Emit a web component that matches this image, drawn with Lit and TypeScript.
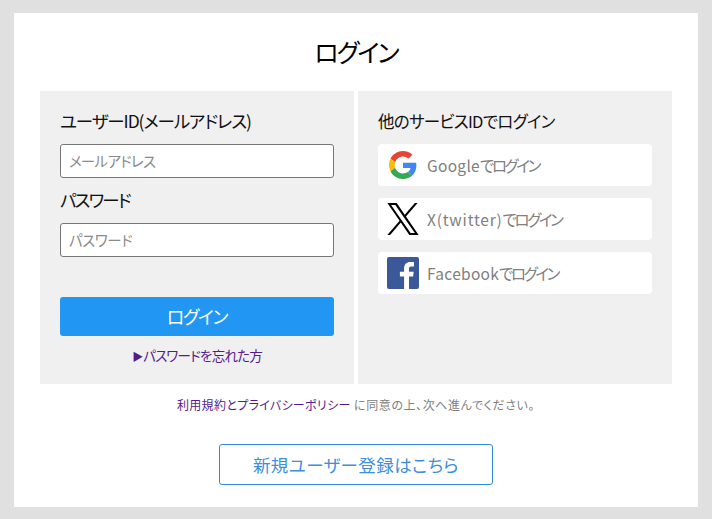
import { LitElement, html, css } from "lit";
import { customElement } from "lit/decorators.js";

@customElement("app-root")
export class AppRoot extends LitElement {
  static styles = css`
    :host { display: block; height: 519px; box-sizing: border-box; padding: 13px 14px 12px; background: #e0e0e0; font-family: "Noto Sans CJK JP", "Noto Sans", sans-serif; font-feature-settings: "palt"; overflow: hidden; }
    .card { background: #fff; height: 494px; box-sizing: border-box; padding: 0 26px; display: flex; flex-direction: column; align-items: stretch; }
    h1 { margin: 0; height: 78px; font-size: 25px; font-weight: 400; line-height: 76px; letter-spacing: -2px; text-align: center; color: #000; }
    .panels { display: grid; grid-template-columns: 314px 314px; column-gap: 4px; height: 293px; }
    .panel { background: #f0f0f0; display: flex; flex-direction: column; box-sizing: border-box; }
    .left { padding: 16px 20px 0; }
    .right { padding: 16px 20px 0; }
    .label { font-size: 17.5px; line-height: 28px; color: #111; margin: 0; letter-spacing: -1.1px; }
    .label.pw { margin-top: 8px; letter-spacing: -1.8px; }
    .right .label { font-size: 16.5px; letter-spacing: -0.7px; }
    .field { display: block; height: 34px; box-sizing: border-box; margin-top: 9px; border: 1px solid #767676; border-radius: 3px; background: #fff; padding: 0 8px; font-size: 14.5px; line-height: 32px; color: #8a8a8a; letter-spacing: -0.7px; }
    .field.pwf { letter-spacing: -0.4px; }
    .submit { height: 39px; margin-top: 40px; border-radius: 3px; background: #2196f3; color: #fff; font-size: 18px; line-height: 39px; letter-spacing: -1.3px; text-align: center; }
    .forgot { margin-top: 9px; text-align: center; font-size: 13.5px; line-height: 20px; letter-spacing: -0.8px; color: #551a8b; }
    .tri { font-size: 11px; letter-spacing: 0; }
    .sns { display: flex; flex-direction: column; gap: 12px; margin-top: 9px; }
    .sns-btn { height: 42px; background: #fff; border-radius: 4px; display: flex; align-items: center; padding-left: 9px; gap: 8px; color: #808080; font-size: 15.5px; letter-spacing: 0.3px; }
    .ja { letter-spacing: -2.4px; }
    .wide { letter-spacing: 0.8px; }
    .sns-btn svg { width: 32px; height: 32px; flex: none; display: block; }
    .sns-btn svg.g { width: 28px; height: 28px; margin: 0 2px; }
    .terms { margin-top: 12px; text-align: center; font-size: 12px; line-height: 18px; color: #808080; letter-spacing: 0.6px; }
    .terms a { color: #551a8b; letter-spacing: 0.32px; }
    .register { align-self: center; margin-top: 30px; width: 274px; height: 41px; box-sizing: border-box; border: 1px solid #2f8bd8; border-radius: 3px; color: #3d8fdb; font-size: 17.5px; line-height: 39px; letter-spacing: 0.4px; text-align: center; }
  `;

  render() {
    return html`
      <div class="card">
        <h1>ログイン</h1>
        <div class="panels">
          <div class="panel left">
            <p class="label">ユーザーID(メールアドレス)</p>
            <div class="field">メールアドレス</div>
            <p class="label pw">パスワード</p>
            <div class="field pwf">パスワード</div>
            <div class="submit">ログイン</div>
            <div class="forgot"><span class="tri">▶</span>パスワードを忘れた方</div>
          </div>
          <div class="panel right">
            <p class="label">他のサービスIDでログイン</p>
            <div class="sns">
              <div class="sns-btn">
                <svg class="g" viewBox="0 0 48 48"><path fill="#EA4335" d="M24 9.5c3.54 0 6.71 1.22 9.21 3.6l6.85-6.85C35.9 2.38 30.47 0 24 0 14.62 0 6.51 5.38 2.56 13.22l7.98 6.19C12.43 13.72 17.74 9.5 24 9.5z"/><path fill="#4285F4" d="M46.98 24.55c0-1.57-.15-3.09-.38-4.55H24v9.02h12.94c-.58 2.96-2.26 5.48-4.78 7.18l7.73 6c4.51-4.18 7.09-10.36 7.09-17.65z"/><path fill="#FBBC05" d="M10.53 28.59c-.48-1.45-.76-2.99-.76-4.59s.27-3.14.76-4.59l-7.98-6.19C.92 16.46 0 20.12 0 24c0 3.88.92 7.54 2.56 10.78l7.97-6.19z"/><path fill="#34A853" d="M24 48c6.48 0 11.93-2.13 15.89-5.81l-7.73-6c-2.15 1.45-4.92 2.3-8.16 2.3-6.26 0-11.57-4.22-13.47-9.91l-7.98 6.19C6.51 42.62 14.62 48 24 48z"/></svg>
                <span>Google<span class="ja">でログイン</span></span>
              </div>
              <div class="sns-btn">
                <svg viewBox="0 0 1200 1227"><path fill="#000" d="M714.163 519.284 1160.89 0h-105.86L667.137 450.887 357.328 0H0l468.492 681.821L0 1226.37h105.866l409.625-476.152 327.181 476.152H1200L714.137 519.284zM569.165 687.828l-47.468-67.894-377.686-540.24h162.604l304.797 435.991 47.468 67.894 396.2 566.721H892.476L569.165 687.854z"/></svg>
                <span class="wide">X(twitter)<span class="ja">でログイン</span></span>
              </div>
              <div class="sns-btn">
                <svg viewBox="0 0 32 32"><rect width="32" height="32" rx="2" fill="#3b5998"/><path fill="#fff" d="M22 32V19.6h4.100l.6-4.800H22v-3.100c0-1.400.4-2.300 2.400-2.300H27V5.100c-.4-.1-2-.2-3.700-.2-3.700 0-6.200 2.200-6.200 6.400v3.500h-4.200v4.800h4.200V32z"/></svg>
                <span>Facebook<span class="ja">でログイン</span></span>
              </div>
            </div>
          </div>
        </div>
        <div class="terms"><a>利用規約とプライバシーポリシー</a> に同意の上、次へ進んでください。</div>
        <div class="register">新規ユーザー登録はこちら</div>
      </div>
    `;
  }
}
